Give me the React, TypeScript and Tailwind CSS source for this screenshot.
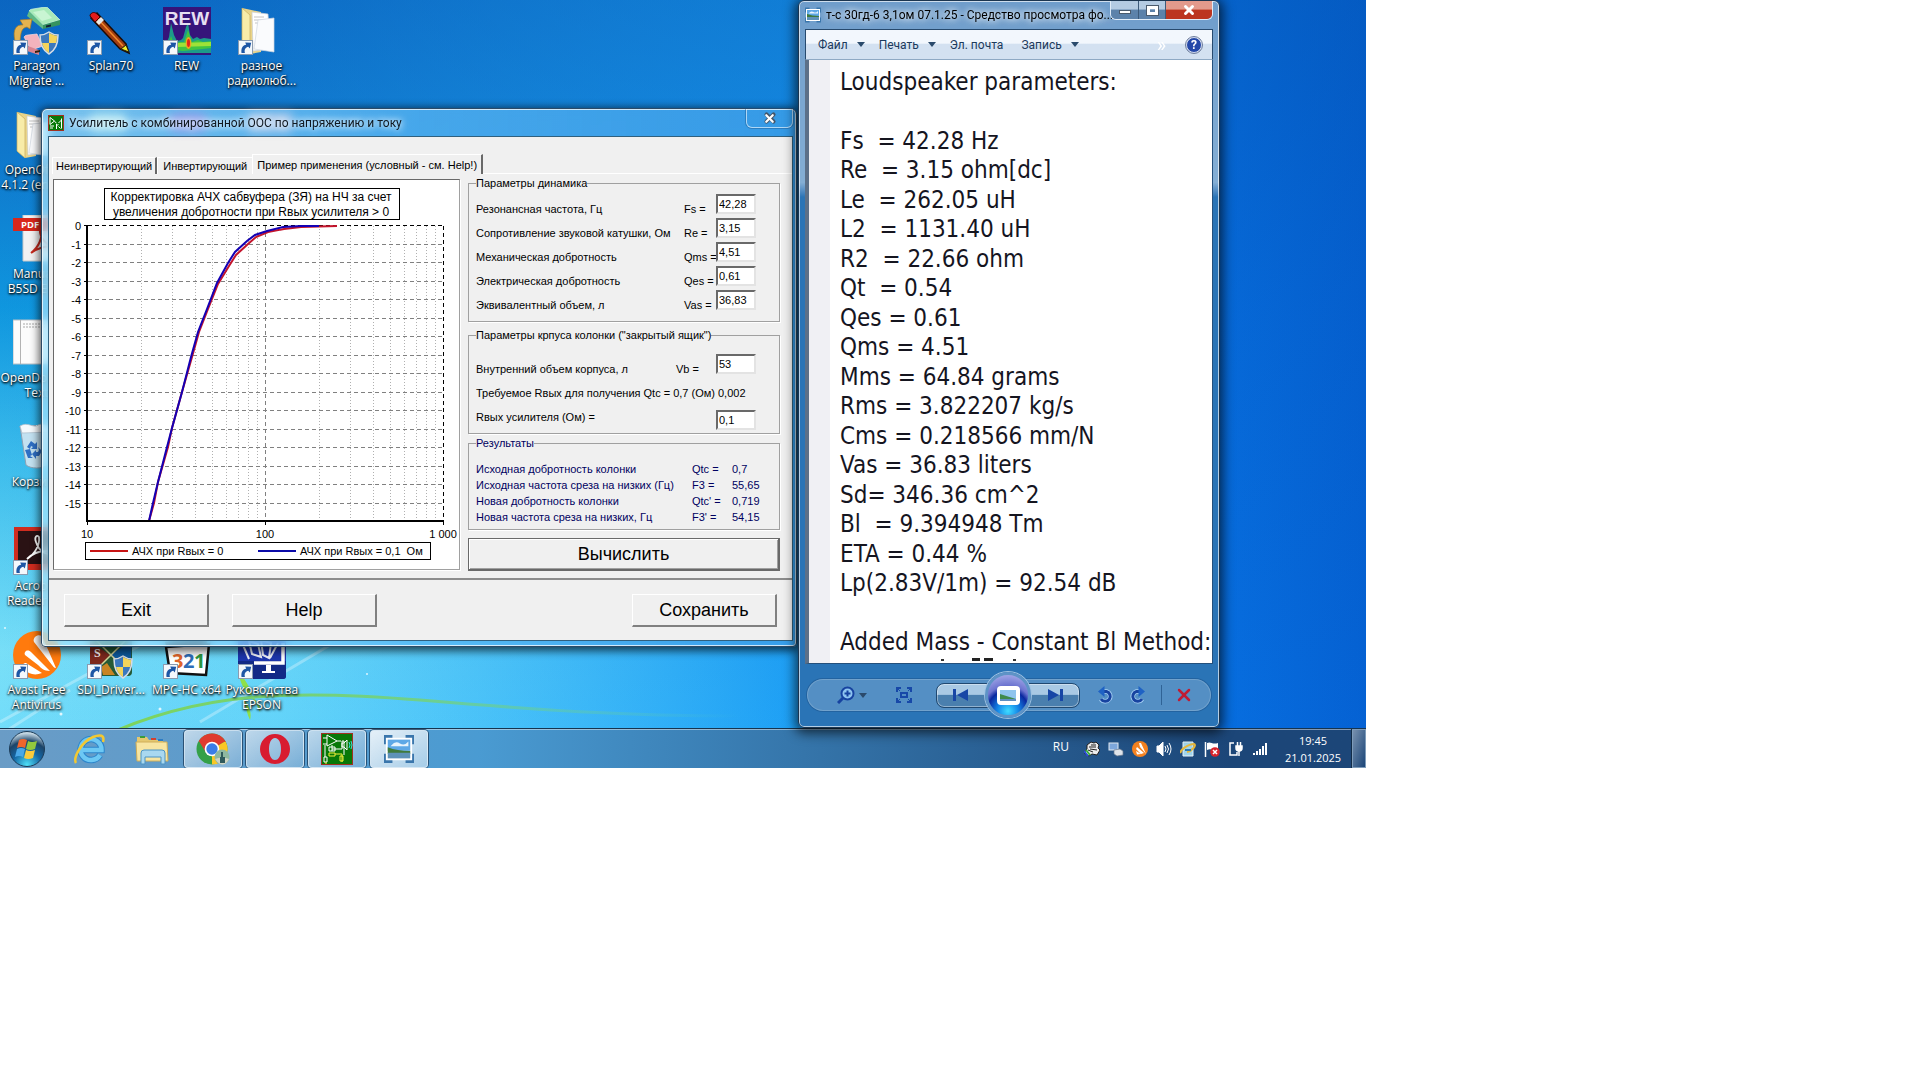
import type { ReactNode } from "react";
import { X } from "lucide-react";

const UI_FONT = "font-['Open_Sans','Noto_Sans',sans-serif]";
const TITLE_FONT = "font-['Roboto','Noto_Sans',sans-serif]";
const CLASSIC_FONT = "font-['Liberation_Sans',Arial,sans-serif]";

const driverFields = [
    { id: "fs", label: "Резонансная частота, Гц", sign: "Fs =", value: "42,28" },
    { id: "re", label: "Сопротивление звуковой катушки, Ом", sign: "Re =", value: "3,15" },
    { id: "qms", label: "Механическая добротность", sign: "Qms =", value: "4,51" },
    { id: "qes", label: "Электрическая добротность", sign: "Qes =", value: "0,61" },
    { id: "vas", label: "Эквивалентный объем, л", sign: "Vas =", value: "36,83" },
];

const results = [
    { label: "Исходная добротность колонки", sign: "Qtc =", value: "0,7" },
    { label: "Исходная частота среза на низких (Гц)", sign: "F3 =", value: "55,65" },
    { label: "Новая добротность колонки", sign: "Qtc' =", value: "0,719" },
    { label: "Новая частота среза на низких, Гц", sign: "F3' =", value: "54,15" },
];

const photoLines = [
    "Loudspeaker parameters:",
    "",
    "Fs  = 42.28 Hz",
    "Re  = 3.15 ohm[dc]",
    "Le  = 262.05 uH",
    "L2  = 1131.40 uH",
    "R2  = 22.66 ohm",
    "Qt  = 0.54",
    "Qes = 0.61",
    "Qms = 4.51",
    "Mms = 64.84 grams",
    "Rms = 3.822207 kg/s",
    "Cms = 0.218566 mm/N",
    "Vas = 36.83 liters",
    "Sd= 346.36 cm^2",
    "Bl  = 9.394948 Tm",
    "ETA = 0.44 %",
    "Lp(2.83V/1m) = 92.54 dB",
    "",
    "Added Mass - Constant Bl Method:",
];

function ShortcutArrow() {
    return (
        <g>
            <rect x="0.5" y="33.5" width="14" height="14" fill="#f4f8fc" stroke="#8a9bb0" />
            <path d="M3.5 46c-.6-5 1.2-7.600 4.700-8.200l-1-2.300 6 .2-1.400 5.800-1.500-1.700c-2.600.7-4.300 2.400-3.400 6.200z" fill="#1d56a5" />
        </g>
    );
}

function Folder() {
    return (
        <g>
            <path d="M4 1l19 4v40l-11 2L4 40z" fill="#e9d48a" />
            <path d="M4 1l8 7v39l-8-7z" fill="#f8eca9" stroke="#c8ae5c" strokeWidth=".7" />
            <path d="M14 5l16 2 2 35-17 2z" fill="#fff" stroke="#c9cdd4" strokeWidth=".7" />
            <path d="M16 10h10M16 13h12M17 16h7" stroke="#b4b4b4" strokeWidth=".8" />
            <path d="M20 13l16-2v34l-20-3z" fill="#fafbfd" stroke="#cfd6df" strokeWidth=".7" />
        </g>
    );
}

function Shield() {
    return (
        <g>
            <path d="M27 28c4 0 6-1 9-3 3 2 5 3 9 3 0 9-2 15-9 19-7-4-9-10-9-19z" fill="#3b78bd" stroke="#d7dde5" strokeWidth="1.500" />
            <path d="M36 26c3 1.500 5 2.500 8 2.700 0 3-.3 5-1 7.300h-7zM36 36v10c-4-2.500-6-5.500-7-10z" fill="#f3d45b" />
        </g>
    );
}

const desktopIcons: { col: string; name: string; icon: ReactNode }[] = [
    {
        col: "col-start-1 row-start-1",
        name: "Paragon Migrate ...",
        icon: (
            <g>
                <path d="M16 4q1-2 4-2l12-2q3 0 4 2l11 11-17 5z" fill="#a8eab9" stroke="#d4f7dc" strokeWidth=".7" />
                <path d="M20 5l11-2 8 8-10 3z" fill="#c9f5d3" />
                <path d="M16 4l14 14v4L14 9z" fill="#5fb986" />
                <path d="M30 18l17-5v5l-17 4z" fill="#36935f" />
                <path d="M33 18.500l5-1v2l-5 1z" fill="#123" />
                <path d="M11 30q1-2 4-2l9-1 6 12-12 4z" fill="#f3b3bd" stroke="#fbdce0" strokeWidth=".7" />
                <path d="M12 38l14 5v5l-12-4z" fill="#d98391" />
                <path d="M22 44l5-1v2l-5 1z" fill="#321" />
                <path d="M2 34C-1 22 4 17 10 18l-3-5 12-1-2 10-3-2c-6 1-6 6-7 14z" fill="#e4b350" stroke="#a97d25" strokeWidth=".7" />
                <Shield />
                <ShortcutArrow />
            </g>
        ),
    },
    {
        col: "col-start-2 row-start-1",
        name: "Splan70",
        icon: (
            <g>
                <path d="M4 11l6-5 29 31 3 9-9-4z" fill="#a13c12" stroke="#1c0b04" strokeWidth="1.500" />
                <path d="M10 11l26 28" stroke="#f08a2c" strokeWidth="1.500" />
                <path d="M3 9c0-3 4-5 7-2l3 3-5 5z" fill="#e21b1b" stroke="#400" />
                <path d="M9 15l5-5 3 3-5 5z" fill="#e8e8e8" />
                <path d="M34 42l5-4 3 7z" fill="#f4ee2a" stroke="#221" />
                <ShortcutArrow />
            </g>
        ),
    },
    {
        col: "col-start-3 row-start-1",
        name: "REW",
        icon: (
            <g>
                <rect width="48" height="48" fill="#36147a" />
                <path d="M2 40l4-10 2-14 3 12 3 6 4-1 2-2 3-11 2-4 2 12 3 4 4-2 3 2 4-1 7 1v14H8z" fill="#1c9b8a" />
                <path d="M4 42l4-13 3 8 6-2 4 0 4-12 4 12 6-2 5 2 8-1v7l-8 1-20 2z" fill="#41c442" />
                <path d="M14 36l34-1v4l-34 1z" fill="#9fe138" />
                <ellipse cx="25.500" cy="36" rx="2.800" ry="6" fill="#f0a31d" />
                <ellipse cx="25.500" cy="36" rx="1.500" ry="4" fill="#e3241a" />
                <text x="24" y="18" textAnchor="middle" fontSize="19" fontWeight="bold" fill="#e6dff2" fontFamily="Liberation Sans">REW</text>
                <ShortcutArrow />
            </g>
        ),
    },
    {
        col: "col-start-4 row-start-1",
        name: "разное радиолюб...",
        icon: (
            <g>
                <Folder />
                <ShortcutArrow />
            </g>
        ),
    },
    { col: "col-start-1 row-start-2", name: "OpenOffice 4.1.2 (en-US)", icon: <Folder /> },
    {
        col: "col-start-1 row-start-3",
        name: "Manual_ B5SD ENG",
        icon: (
            <g>
                <path d="M10 0h28l8 8v38H10z" fill="#f2f2f2" stroke="#c9c9c9" />
                <path d="M18 38c8-6 12-16 10-24-3 4 3 16 13 18-8-2-18 2-23 6z" fill="none" stroke="#c4281c" strokeWidth="2" />
                <rect y="3" width="40" height="13" fill="#d9271c" />
                <text x="8" y="13" fontSize="9.500" fontWeight="bold" fill="#fff" fontFamily="Open Sans">PDF</text>
            </g>
        ),
    },
    {
        col: "col-start-1 row-start-4",
        name: "OpenDocument Text",
        icon: (
            <g>
                <path d="M0 1h40v44H0z" fill="#fcfcfc" stroke="#b9bec4" />
                <path d="M7.500 1v44" stroke="#b3b3b3" />
                <path d="M10 5h22M10 8h22" stroke="#a8a8a8" strokeDasharray="2 1" />
            </g>
        ),
    },
    {
        col: "col-start-1 row-start-5",
        name: "Корзина",
        icon: (
            <g>
                <path d="M7 3l34-1-6 40c-6 4-17 4-22 0z" fill="#dce9f2" fillOpacity=".85" stroke="#8fa3b4" />
                <path d="M7 3c8-5 14 3 18-1 6-3 10 3 16 0l-2 7-30 1z" fill="#f5f9fc" stroke="#a9bac8" strokeWidth=".7" />
                <path d="M14 24l4-6 4 3 2-2v7h-6l2-2-2-1-1 3zM25 24l4 4-3 5h-3v3l-4-5 4-4v2h2l1-2zM12 27l5-1 2 6-2 1 3 2h-5z" fill="#2f6fc4" />
            </g>
        ),
    },
    {
        col: "col-start-1 row-start-6",
        name: "Acrobat Reader DC",
        icon: (
            <g>
                <rect x="1" width="46" height="43" fill="#d02c1f" />
                <rect x="5" y="4" width="38" height="33" fill="#2a1214" />
                <path d="M14 32c9-6 13-15 12-22-2-3-5 0-3 5 3 9 9 12 14 12 3-1 2-4-4-3-8 0-15 4-19 8z" fill="none" stroke="#fff" strokeWidth="1.800" />
                <ShortcutArrow />
            </g>
        ),
    },
    {
        col: "col-start-1 row-start-7",
        name: "Avast Free Antivirus",
        icon: (
            <g>
                <circle cx="24" cy="24" r="24" fill="#ff7a0d" />
                <path d="M22 6c3-3 7-2 8 1l13 30c-2 0-3-2-4-3L21 11c-1-2 0-4 1-5zM13 20c2-1 4 0 5 1l19 19c-6 0-9-3-12-6L12 24c-1-2 0-3 1-4zM13 32l16 10c-7 3-14 1-18-4-2-4-1-6 2-6z" fill="#fff" />
                <ShortcutArrow />
            </g>
        ),
    },
    {
        col: "col-start-2 row-start-7",
        name: "SDI_Driver...",
        icon: (
            <g>
                <rect x="3" y="2" width="42" height="43" rx="4" fill="#255a36" />
                <path d="M3 10l20 14L6 42H3z" fill="#7d281d" />
                <path d="M45 10L23 24l20 18z" fill="#0c5a9e" />
                <path d="M8 8l30 30M40 8L10 38" stroke="#d7d59a" strokeWidth="1.500" />
                <text x="7" y="26" fontSize="12" fontWeight="bold" fill="#fff" fontFamily="Liberation Serif">S</text>
                <path d="M14 36l6-4 8 12H16z" fill="#c88424" />
                <Shield />
                <ShortcutArrow />
            </g>
        ),
    },
    {
        col: "col-start-3 row-start-7",
        name: "MPC-HC x64",
        icon: (
            <g>
                <path d="M2 11l40-7 2 8-40 6z" fill="#222" />
                <path d="M3 16l43-3-3 31-36-2z" fill="#fff" stroke="#111" strokeWidth="2.500" />
                <text x="9" y="37" fontSize="20" fontWeight="bold" fill="#e0642a" fontFamily="Open Sans">3</text>
                <text x="20" y="37" fontSize="20" fontWeight="bold" fill="#2d6cb8" fontFamily="Open Sans">2</text>
                <text x="31" y="37" fontSize="20" fontWeight="bold" fill="#2c9640" fontFamily="Open Sans">1</text>
                <ShortcutArrow />
            </g>
        ),
    },
    {
        col: "col-start-4 row-start-7",
        name: "Руководства EPSON",
        icon: (
            <g>
                <rect width="48" height="48" rx="3" fill="#1d36ad" />
                <path d="M0 30h48v15a3 3 0 0 1-3 3H3a3 3 0 0 1-3-3z" fill="#122a86" />
                <path d="M5 14l6 14M11 10l9 3 3 13-9-3zM23 9l10 3-2 15-6-3zM40 12l-8 15" fill="none" stroke="#f0f3fd" strokeWidth="2" />
                <path d="M45 12v20H16" fill="none" stroke="#fff" strokeWidth="3.500" />
                <path d="M28 34h5v6h-5zM24 40h13v2H24z" fill="#fff" />
                <ShortcutArrow />
            </g>
        ),
    },
];

function DesktopIcon({ col, name, icon }: { col: string; name: string; icon: ReactNode }) {
    return (
        <button type="button" className={`${col} flex flex-col items-center justify-start gap-[3px]`}>
            <svg width="48" height="48" viewBox="0 0 48 48" className="shrink-0">
                {icon}
            </svg>
            <span className="w-[72px] text-center text-[12px] leading-[15px] text-white [text-shadow:0_1px_2px_#000,1px_1px_3px_#000]">
                {name}
            </span>
        </button>
    );
}

function Wallpaper() {
    return (
        <svg viewBox="0 0 1366 768" preserveAspectRatio="none" className="absolute inset-0 h-full w-full">
            <defs>
                <linearGradient id="sky" x1="0" y1="0" x2="0" y2="1">
                    <stop offset="0" stopColor="#0f74d2" />
                    <stop offset=".2" stopColor="#1489da" />
                    <stop offset=".4" stopColor="#12a8ea" />
                    <stop offset=".6" stopColor="#45cdf5" />
                    <stop offset=".85" stopColor="#7ee6fb" />
                    <stop offset="1" stopColor="#6fdcfb" />
                </linearGradient>
                <linearGradient id="east" x1="0" y1="0" x2="1" y2="0">
                    <stop offset="0" stopColor="#0a84ee" stopOpacity="0" />
                    <stop offset=".2" stopColor="#25b0fb" stopOpacity=".2" />
                    <stop offset=".58" stopColor="#1a9ef6" stopOpacity=".95" />
                    <stop offset=".85" stopColor="#0874e6" />
                    <stop offset="1" stopColor="#0562d4" />
                </linearGradient>
                <linearGradient id="top" x1="0" y1="0" x2="0" y2="1">
                    <stop offset="0" stopColor="#0450a8" stopOpacity=".4" />
                    <stop offset=".4" stopColor="#0450b0" stopOpacity=".2" />
                    <stop offset="1" stopColor="#0450b0" stopOpacity="0" />
                </linearGradient>
                <linearGradient id="stem" x1="0" y1="0" x2="1" y2="0">
                    <stop offset="0" stopColor="#7ed45a" />
                    <stop offset=".5" stopColor="#6fd08a" />
                    <stop offset="1" stopColor="#4fc4c8" stopOpacity="0" />
                </linearGradient>
            </defs>
            <rect width="1366" height="768" fill="url(#sky)" />
            <rect width="1366" height="768" fill="url(#east)" />
            <rect width="1366" height="768" fill="url(#top)" />
            <path d="M0 722L150 640M0 735L70 690M200 722L330 645" stroke="#fff" strokeOpacity=".3" strokeWidth="3" />
            <path d="M100 738C200 690 300 690 420 700S620 716 740 716" fill="none" stroke="url(#stem)" strokeWidth="3" />
            <path d="M238 672c3 12 6 20 14 24-2-10-8-18-14-24zM244 700c2 8 3 14 6 20 2-8-1-14-6-20zM252 698c4 4 6 10 8 14 1-6-3-12-8-14z" fill="#8ee04a" />
            <g fill="#fff" fillOpacity=".8">
                <circle cx="61" cy="714" r="1.500" />
                <circle cx="160" cy="709" r="1.500" />
                <circle cx="367" cy="674" r="1" />
                <circle cx="5" cy="628" r="1" />
            </g>
        </svg>
    );
}

const minorTicks = [2, 3, 4, 5, 6, 7, 8, 9];
const X0 = 34.5;
const DECADE = 178;
const Y0 = 47;
const STEP = 18.5;
const redCurve =
    "96,342 101,324 105,303 115,268 119,249 129,213 139,178 146,153 155,130 165,105 176,87 183,76 195,65 203,58 215,53 231,50 248,48 284,47";
const blueCurve =
    "96,342 100,324 105,303 114,268 119,249 129,213 138,178 145,153 154,130 164,104 175,84 182,73 194,62 202,56 214,52 230,48 248,47 266,47";

function ResponseChart() {
    return (
        <svg width="405" height="389" viewBox="1 1 405 389" fontFamily="Liberation Sans" fontSize="12" fill="#000">
            <rect x="51.5" y="9.500" width="295" height="31" fill="#fff" stroke="#000" />
            <text x="198" y="22" textAnchor="middle">Корректировка АЧХ сабвуфера (ЗЯ) на НЧ за счет</text>
            <text x="198" y="37" textAnchor="middle">увеличения добротности при Rвых усилителя &gt; 0</text>
            {[0, 1].map((decade) =>
                minorTicks.map((tick) => {
                    const x = Math.round(X0 + DECADE * (decade + Math.log10(tick))) + 0.5;
                    return <path key={`${decade}-${tick}`} d={`M${x} 47V341`} stroke="#b0b0b0" strokeDasharray="1 2" />;
                }),
            )}
            <path d="M212.500 47V341" stroke="#808080" strokeDasharray="4 3" />
            {Array.from({ length: 16 }, (_, i) => {
                const y = Math.round(Y0 + i * STEP) - 0.5;
                return (
                    <g key={i}>
                        <path d={`M31 ${y}H35M33 ${y + 9}H35`} stroke="#000" />
                        <path d={`M35 ${y}H390`} stroke={i === 0 ? "#000" : "#808080"} strokeDasharray="4 3" />
                        <text x="28" y={y + 4} textAnchor="end" fontSize="11">
                            {i === 0 ? "0" : -i}
                        </text>
                    </g>
                );
            })}
            <path d="M390.500 47V341" stroke="#000" strokeDasharray="4 3" />
            <polyline points={redCurve} fill="none" stroke="#c4142c" strokeWidth="2" />
            <polyline points={blueCurve} fill="none" stroke="#1400b4" strokeWidth="2" />
            <path d="M34 46V342H391" fill="none" stroke="#000" strokeWidth="2" />
            <path d="M34.500 342V346M212.500 342V346M390.500 342V346" stroke="#000" />
            <text x="34" y="359" textAnchor="middle" fontSize="11">10</text>
            <text x="212" y="359" textAnchor="middle" fontSize="11">100</text>
            <text x="390" y="359" textAnchor="middle" fontSize="11">1 000</text>
            <rect x="32.5" y="363.500" width="345" height="17" fill="#fff" stroke="#000" />
            <path d="M37 372H75" stroke="#c81414" strokeWidth="2" />
            <text x="79" y="376" fontSize="11">АЧХ при Rвых = 0</text>
            <path d="M205 372H243" stroke="#0a0aa8" strokeWidth="2" />
            <text x="247" y="376" fontSize="11" xmlSpace="preserve">АЧХ при Rвых = 0,1  Ом</text>
        </svg>
    );
}

function Group({ title, className, children }: { title: string; className: string; children: ReactNode }) {
    return (
        <fieldset className={`border border-[#a0a0a0] pl-[7px] shadow-[1px_1px_0_#fff] ${className}`}>
            <legend className="px-0 leading-3">{title}</legend>
            {children}
        </fieldset>
    );
}

function Field({ id, value, className = "" }: { id: string; value: string; className?: string }) {
    return (
        <input
            id={id}
            defaultValue={value}
            className={`h-5 w-10 border-2 border-t-[#696969] border-r-[#e3e3e3] border-b-[#e3e3e3] border-l-[#696969] bg-white px-px outline-none ${className}`}
        />
    );
}

function PushButton({ children }: { children: ReactNode }) {
    return (
        <button
            type="button"
            className="h-[33px] w-[145px] border-t border-r-2 border-b-2 border-l border-t-white border-r-[#808080] border-b-[#808080] border-l-white bg-[#f0f0f0] text-[18px] leading-6"
        >
            {children}
        </button>
    );
}

function AmplifierIcon({ size }: { size: number }) {
    return (
        <svg width={size} height={size} viewBox="0 0 32 32" className="shrink-0">
            <rect x=".5" y=".5" width="31" height="31" fill="#087808" stroke="#a03020" />
            <path d="M6 2l10 6-10 5zM2 5h4M2 11h4M16 8h4M11 12v6M11 16h10v-8h2v14" fill="none" stroke="#fff" />
            <path d="M8 14h6v4H8zM3 24h3v5H3zM4 12v12" fill="none" stroke="#fff" />
            <path d="M8 20h6v3H8zM14 21h7v8M19 23h3v5h-3zM4 30h2" fill="none" stroke="#f6f03a" />
            <path d="M21 10h2l3-3v10l-3-3h-2z" fill="none" stroke="#fff" />
            <path d="M28 9q2 3 0 6M30 8q2 4 0 8" fill="none" stroke="#3ce0e0" />
        </svg>
    );
}

function AmplifierTitleIcon() {
    return (
        <svg width="16" height="16" viewBox="0 0 16 16" className="shrink-0">
            <rect x=".5" y=".5" width="15" height="15" fill="#087808" stroke="#a03020" />
            <path d="M2 2.500v7l4.500-3.500zM6.500 6.500l2 1.500M2 11h4M2 13h3M8.500 9v5M8.500 10.500l2-1M10.500 11.500l2 2M13.500 3.500v10M10.500 8l3-3" fill="none" stroke="#fff" />
        </svg>
    );
}

function AmplifierWindow() {
    return (
        <section className="absolute top-[108px] left-[41px] w-[756px] rounded-t-md rounded-b-sm border border-[#2c4a66] bg-linear-to-r from-[#a8e4fb]/70 via-[#5cb8f4]/70 to-[#3e9fe8]/80 pr-[3px] pb-[5px] pl-[6px] shadow-[0_2px_9px_2px_rgba(0,0,0,.65),inset_0_0_0_1px_rgba(255,255,255,.75)] backdrop-blur-[5px]">
            <header className="relative flex h-[27px] items-center">
                <div className="absolute inset-y-1 left-10 flex gap-10 opacity-60 blur-[5px]">
                    <span className="w-10 rounded-full bg-[#d4fbf4]" />
                    <span className="w-10 rounded-full bg-[#a890e8]" />
                    <span className="w-11 bg-[#e6dcec]" />
                </div>
                <div className="relative flex items-center gap-[5px]">
                    <AmplifierTitleIcon />
                    <h1 className={`text-[12px] leading-4 text-[#101820] [text-shadow:0_0_6px_#fff,0_0_8px_#fff] ${TITLE_FONT}`}>
                        Усилитель с комбинированной ООС по напряжению и току
                    </h1>
                </div>
                <button
                    type="button"
                    aria-label="Закрыть"
                    className="absolute top-0 right-0 flex h-[19px] w-[47px] items-center justify-center rounded-b-md border border-t-0 border-white/60 shadow-[0_0_0_1px_rgba(30,80,130,.4)]"
                >
                    <X size={14} strokeWidth={7} className="absolute text-[#44566a]" />
                    <X size={13} strokeWidth={4} className="absolute text-white" />
                </button>
            </header>

            <div className={`border border-[#30607e] bg-[#f0f0f0] text-black ${CLASSIC_FONT}`}>
                <nav className="flex h-[37px] items-end pl-[3px] text-[11px]">
                    <button type="button" className="h-[17px] border-t border-r-2 border-l border-t-white border-r-[#696969] border-l-white px-[3px] leading-4">
                        Неинвертирующий
                    </button>
                    <button type="button" className="h-[17px] border-t border-l border-white px-[5px] leading-4">
                        Инвертирующий
                    </button>
                    <button type="button" className="h-5 border-t border-r-2 border-l border-t-white border-r-[#696969] border-l-white px-1 leading-4">
                        Пример применения (условный - см. Help!)
                    </button>
                    <span className="h-px flex-1 bg-white" />
                </nav>

                <div className="flex gap-2 border-b-2 border-[#8c8c8c] pt-[3px] pr-3 pb-[7px] pl-1">
                    <div className="mt-[2px] min-w-0 flex-1">
                        <div className="h-[391px] border border-t-[#696969] border-r-[#a0a0a0] border-b-[#a0a0a0] border-l-[#696969] bg-white shadow-[1px_1px_0_#fff]">
                            <ResponseChart />
                        </div>
                    </div>

                    <form className="flex w-[312px] flex-col text-[11px]">
                        <Group title="Параметры динамика" className="pt-[5px] pb-[7px]">
                            {driverFields.map((field) => (
                                <div key={field.id} className="grid h-6 grid-cols-[208px_32px_40px] items-end leading-[17px]">
                                    <label htmlFor={field.id} className="whitespace-nowrap">{field.label}</label>
                                    <span className="whitespace-nowrap">{field.sign}</span>
                                    <Field id={field.id} value={field.value} className="self-start" />
                                </div>
                            ))}
                        </Group>

                        <Group title={'Параметры крпуса колонки ("закрытый ящик")'} className="mt-[7px] pt-[13px] pb-[3px]">
                            <div className="grid h-6 grid-cols-[200px_40px_40px] items-end leading-[17px]">
                                <label htmlFor="vb">Внутренний объем корпуса, л</label>
                                <span>Vb =</span>
                                <Field id="vb" value="53" className="self-start" />
                            </div>
                            <div className="flex h-6 items-end gap-[3px] leading-[17px]">
                                <span className="whitespace-nowrap">Требуемое Rвых для получения Qtc = 0,7 (Ом)</span>
                                <output>0,002</output>
                            </div>
                            <div className="grid h-7 grid-cols-[240px_40px] items-end">
                                <label htmlFor="rout" className="leading-[25px]">Rвых усилителя (Ом) =</label>
                                <Field id="rout" value="0,1" />
                            </div>
                        </Group>

                        <Group title="Результаты" className="mt-[3px] pt-3 pb-1 text-[#000060]">
                            {results.map((row) => (
                                <div key={row.sign} className="grid grid-cols-[216px_40px_40px] leading-4">
                                    <span className="whitespace-nowrap">{row.label}</span>
                                    <span>{row.sign}</span>
                                    <output>{row.value}</output>
                                </div>
                            ))}
                        </Group>

                        <button
                            type="button"
                            className="mt-2 h-[33px] border border-r-2 border-b-2 border-[#696969] text-[18px] leading-6 shadow-[inset_1px_1px_0_#fff,inset_-1px_-1px_0_#a0a0a0]"
                        >
                            Вычислить
                        </button>
                    </form>
                </div>

                <footer className="flex gap-[23px] px-[15px] pt-[14px] pb-[13px]">
                    <PushButton>Exit</PushButton>
                    <PushButton>Help</PushButton>
                    <span className="flex-1" />
                    <PushButton>Сохранить</PushButton>
                </footer>
            </div>
        </section>
    );
}

function Caret() {
    return (
        <svg width="8" height="5" viewBox="0 0 8 5">
            <path d="M0 0h8L4 5z" fill="#2a4a6c" />
        </svg>
    );
}

function PictureIcon({ size = 16 }: { size?: number }) {
    return (
        <svg width={size} height={size} viewBox="0 0 32 32" className="shrink-0">
            <path d="M0 1h9v6H6v4H0zM23 1h9v10h-6V7h-3zM32 31h-9v-6h3v-4h6zM9 31H0V21h6v4h3z" fill="#3a76ac" />
            <rect x="2" y="4" width="28" height="24" fill="#fff" />
            <rect x="4" y="6" width="24" height="12" fill="#5ea8e6" />
            <path d="M8 12q4-5 9-2t9-2v5H7z" fill="#e7f3fc" />
            <path d="M4 14q10 4 24 4v3H4z" fill="#3f7a3c" />
            <path d="M4 20h24v6H4z" fill="#5e92b8" />
        </svg>
    );
}

function RotateIcon({ clockwise = false }: { clockwise?: boolean }) {
    return (
        <svg width="16" height="18" viewBox="0 0 16 18">
            <g transform={clockwise ? "translate(16 0) scale(-1 1)" : undefined}>
                <path d="M6 5.500h3.500a5 5 0 1 1-5.500 7.500" fill="none" stroke="#a8d0f4" strokeWidth="4.500" />
                <path d="M6 5.500h3.500a5 5 0 1 1-5.500 7.500" fill="none" stroke="#1743a0" strokeWidth="3" />
                <path d="M1 5.500L7.500 0v11z" fill="#1f62c4" />
            </g>
        </svg>
    );
}

function ViewerWindow() {
    return (
        <section className="absolute top-0 left-[798px] flex w-[422px] flex-col rounded-md border border-[#1b3550] bg-linear-to-b from-[#6f9dcb] via-[#84aed4] via-25% to-[#2a74b6] to-27% px-[6px] pb-px text-[#1c3a5c] shadow-[0_2px_12px_3px_rgba(0,0,0,.65),inset_0_0_0_1px_rgba(255,255,255,.65)]">
            <header className="flex h-7 items-start justify-between">
                <div className="flex h-7 min-w-0 items-center gap-[5px]">
                    <PictureIcon />
                    <h2 className={`whitespace-nowrap text-[12px] leading-4 text-black [text-shadow:0_0_6px_#fff,0_0_8px_#fff] ${TITLE_FONT}`}>
                        т-с 30гд-6 3,1ом 07.1.25 - Средство просмотра фо...
                    </h2>
                </div>
                <div className="flex h-[19px] shrink-0 overflow-hidden rounded-b-md border border-t-0 border-[#e0ecf8]">
                    <button type="button" aria-label="Свернуть" className="flex w-7 items-center justify-center border-r border-[#3c5a7a] bg-linear-to-b from-[#b4cbe2] from-45% to-[#5c82aa] to-50%">
                        <span className="mt-1 h-[4px] w-3 border border-[#4a5a6c] bg-white" />
                    </button>
                    <button type="button" aria-label="Развернуть" className="flex w-[27px] items-center justify-center border-r border-[#3c5a7a] bg-linear-to-b from-[#b4cbe2] from-45% to-[#5c82aa] to-50%">
                        <span className="h-[9px] w-[11px] border-[3px] border-white outline outline-[#4a5a6c]" />
                    </button>
                    <button type="button" aria-label="Закрыть" className="flex w-[46px] items-center justify-center bg-linear-to-b from-[#e39a8c] from-45% to-[#bc3520] to-50%">
                        <X size={14} strokeWidth={5} className="text-white" />
                    </button>
                </div>
            </header>

            <nav className={`flex h-[31px] items-center border border-b-[#8ea9c4] border-[#274a6e] bg-linear-to-b from-[#f2f7fd] from-45% to-[#d3e1f1] to-50% pr-[10px] pl-3 text-[12px] ${TITLE_FONT}`}>
                <button type="button" className="flex items-center gap-[9px]">Файл <Caret /></button>
                <button type="button" className="ml-[14px] flex items-center gap-[9px]">Печать <Caret /></button>
                <button type="button" className="ml-[14px]">Эл. почта</button>
                <button type="button" className="ml-[18px] flex items-center gap-[9px]">Запись <Caret /></button>
                <span className="flex-1" />
                <span className="mr-5 text-[20px] leading-4 text-white">»</span>
                <button type="button" aria-label="Справка" className="flex size-4 items-center justify-center rounded-full border border-[#d4dcf0] bg-[#2448a8] text-[12px] leading-3 font-bold text-white outline outline-[#6c7c9c]">
                    ?
                </button>
            </nav>

            <div className="h-[604px] overflow-hidden border-r border-b border-l-4 border-[#5c7088] border-r-[#24507c] border-b-[#24507c] bg-[#f0f0f4] pl-[21px]">
                <div className="h-full bg-white pt-[7px] pl-[10px]">
                    <div className="grid h-[590px] auto-rows-fr items-center font-['DejaVu_Sans_Condensed','Noto_Sans',sans-serif] text-[24px] text-[#15151f]">
                        {photoLines.map((line, i) => (
                            <p key={i} className="leading-7 whitespace-pre">{line}</p>
                        ))}
                    </div>
                    <div className="ml-[101px] flex h-1 items-end">
                        <i className="h-[2px] w-[3px] bg-[#333]" />
                        <i className="ml-7 h-[3px] w-2 bg-[#222]" />
                        <i className="ml-1 h-[3px] w-[9px] bg-[#222]" />
                        <i className="ml-5 h-[2px] w-[3px] bg-[#333]" />
                    </div>
                </div>
            </div>

            <div className="flex h-[62px] items-center px-[2px]">
                <div className="flex h-8 w-full items-center rounded-full border border-[#7fa9cf]/70 bg-white/20 pr-4 pl-[29px] shadow-[0_0_0_1px_rgba(20,60,110,.3)]">
                    <button type="button" aria-label="Масштаб" className="flex items-center gap-1">
                        <svg width="18" height="18" viewBox="0 0 18 18" fill="none" stroke="#1743a0">
                            <circle cx="10.500" cy="7.500" r="6" fill="#8ec4f0" strokeWidth="2" />
                            <path d="M6 12L1 17" strokeWidth="3" />
                            <path d="M7.500 7.500h6M10.500 4.500v6" strokeWidth="2" />
                        </svg>
                        <Caret />
                    </button>
                    <button type="button" aria-label="По размеру окна" className="ml-[29px]">
                        <svg width="16" height="16" viewBox="0 0 16 16" fill="none" stroke="#1748a8" strokeWidth="2">
                            <path d="M1 5V1h4M11 1h4v4M15 11v4h-4M5 15H1v-4M5 6h6v4H5z" />
                            <path d="M1 1l3 3M15 1l-3 3M15 15l-3-3M1 15l3-3" strokeWidth="1" />
                        </svg>
                    </button>
                    <button type="button" aria-label="Назад" className="ml-6 flex h-[25px] w-[55px] items-center justify-center rounded-l-lg border border-[#204870] bg-linear-to-b from-[#a9c9e4] from-45% to-[#4a7fae] to-50% pr-1 shadow-[inset_0_0_0_1px_rgba(255,255,255,.4)]">
                        <svg width="15" height="12" viewBox="0 0 15 12" fill="#1746a6">
                            <path d="M0 0h3v12H0zM15 0v12L4 6z" />
                        </svg>
                    </button>
                    <button type="button" aria-label="Слайд-шоу" className="relative z-10 -mx-1 flex size-[46px] shrink-0 items-center justify-center rounded-full border-[3px] border-[#5e93c6] bg-[radial-gradient(circle_at_50%_90%,#40dcff_0,#1488e8_25%,#0a28a0_50%,#6c74d0_62%,#b8bcf0_100%)] shadow-[0_0_0_1px_#9fc2e2]">
                        <span className="flex h-[19px] w-[23px] items-center justify-center rounded-sm bg-white">
                            <svg width="16" height="11" viewBox="0 0 16 11">
                                <rect width="16" height="11" fill="#8fc4ee" />
                                <path d="M0 4l16 5v2H0z" fill="#3f8a4c" />
                                <path d="M0 9h16v2H0z" fill="#5e8fc0" />
                            </svg>
                        </span>
                    </button>
                    <button type="button" aria-label="Далее" className="flex h-[25px] w-[55px] items-center justify-center rounded-r-lg border border-[#204870] bg-linear-to-b from-[#a9c9e4] from-45% to-[#4a7fae] to-50% pl-1 shadow-[inset_0_0_0_1px_rgba(255,255,255,.4)]">
                        <svg width="15" height="12" viewBox="0 0 15 12" fill="#1746a6">
                            <path d="M12 0h3v12h-3zM0 0v12l11-6z" />
                        </svg>
                    </button>
                    <button type="button" aria-label="Повернуть влево" className="ml-[17px]">
                        <RotateIcon />
                    </button>
                    <button type="button" aria-label="Повернуть вправо" className="ml-[17px]">
                        <RotateIcon clockwise />
                    </button>
                    <span className="ml-[15px] h-5 w-px bg-[#2f6396]" />
                    <button type="button" aria-label="Удалить" className="ml-3">
                        <X size={20} strokeWidth={3} className="text-[#c01c34]" />
                    </button>
                </div>
            </div>
        </section>
    );
}

function TaskButton({ active = false, label, children }: { active?: boolean; label: string; children: ReactNode }) {
    return (
        <button
            type="button"
            aria-label={label}
            className={`flex h-[38px] w-[58px] items-center justify-center rounded-sm border border-[#dceaf4]/80 shadow-[0_0_0_1px_rgba(20,50,80,.7)] ${active ? "bg-linear-to-br from-white/85 to-white/50" : "bg-linear-to-br from-white/60 to-white/20"}`}
        >
            {children}
        </button>
    );
}

function Taskbar() {
    return (
        <footer className="absolute inset-x-0 bottom-0 flex h-10 items-center border-t border-[#16344f] bg-linear-to-r from-[#6a9cc6] via-[#4a9bd2] via-35% to-[#1c4678] to-90% shadow-[inset_0_1px_0_rgba(255,255,255,.45)]">
            <button type="button" aria-label="Пуск" className="ml-2">
                <svg width="38" height="38" viewBox="0 0 38 38">
                    <defs>
                        <radialGradient id="orb" cx=".5" cy=".95" r=".9">
                            <stop offset="0" stopColor="#4fe0f8" />
                            <stop offset=".45" stopColor="#1466a4" />
                            <stop offset=".75" stopColor="#1c4468" />
                            <stop offset="1" stopColor="#c4d8e4" />
                        </radialGradient>
                    </defs>
                    <circle cx="19" cy="19" r="17.500" fill="url(#orb)" stroke="#1c3c58" />
                    <path d="M11 10q4-2 8 0l-2 8q-4-2-8 0z" fill="#f0652c" />
                    <path d="M20 11q4 2 9 0l-2 8q-5 2-9 0z" fill="#92c83e" />
                    <path d="M9 19q4-2 8 0l-2 8q-4-2-8 0z" fill="#4aa8e8" />
                    <path d="M18 20q4 2 9 0l-2 8q-5 2-9 0z" fill="#fbcb3c" />
                </svg>
            </button>
            <button type="button" aria-label="Internet Explorer" className="ml-[27px]">
                <svg width="34" height="34" viewBox="0 0 34 34" fill="none">
                    <path d="M27 23a10.500 10.500 0 1 1 1.500-5H9" stroke="#2c86cc" strokeWidth="6.500" />
                    <path d="M27 23a10.500 10.500 0 1 1 1.500-5H9" stroke="#6cc8f4" strokeWidth="4.500" />
                    <path d="M3 31C0 26 8 10 20 5c7-3 12-2 10 5" stroke="#f2c832" strokeWidth="2.500" />
                </svg>
            </button>
            <button type="button" aria-label="Проводник" className="ml-7">
                <svg width="34" height="32" viewBox="0 0 34 32">
                    <path d="M2 4h10l2 3h14v6H2z" fill="#e4c870" />
                    <path d="M5 3h5v2H5z" fill="#3a9c3c" />
                    <path d="M16 5h5v2h-5z" fill="#d4402c" />
                    <path d="M23 6h5v2h-5z" fill="#2c7cc4" />
                    <path d="M1 9h31l1 19H2z" fill="#f7e5a2" stroke="#d0ae58" />
                    <path d="M6 31V20q0-3 3-3h18q3 0 3 3v11h-4v-7H10v7z" fill="#a9d8f0" stroke="#4c94c4" />
                </svg>
            </button>
            <div className="ml-[15px] flex gap-1">
                <TaskButton label="Chrome">
                    <svg width="34" height="34" viewBox="0 0 34 34">
                        <circle cx="16" cy="17" r="15.500" fill="#34a048" />
                        <path d="M16 17L2.600 9.200A15.500 15.500 0 0 1 29.400 9.200z" fill="#df3b2f" />
                        <path d="M16 17L29.400 9.200A15.500 15.500 0 0 1 16 32.500z" fill="#fbc725" />
                        <path d="M16 10h13.800L29.400 9.200H3L9.900 20.500z" fill="#df3b2f" />
                        <circle cx="16" cy="17" r="7.300" fill="#fff" />
                        <circle cx="16" cy="17" r="5.700" fill="#3b7de8" />
                        <circle cx="26" cy="25" r="7.500" fill="#8fb8a0" />
                        <path d="M19 27q7-3 14 0-3 6-7 5.500T19 27z" fill="#d0d4c4" />
                        <path d="M25 20h2v5h2v6h-5v-6h1z" fill="#2f5a5c" />
                    </svg>
                </TaskButton>
                <TaskButton label="Opera">
                    <svg width="32" height="32" viewBox="0 0 32 32">
                        <path fillRule="evenodd" d="M16 1a15 15 0 1 0 0 30 15 15 0 0 0 0-30zm0 4c4 0 6 5 6 11s-2 11-6 11-6-5-6-11 2-11 6-11z" fill="#d81c30" />
                    </svg>
                </TaskButton>
                <TaskButton label="Усилитель">
                    <AmplifierIcon size={32} />
                </TaskButton>
                <TaskButton active label="Средство просмотра">
                    <PictureIcon size={30} />
                </TaskButton>
            </div>
            <span className="flex-1" />
            <span className="pb-1 text-[12px] text-white">RU</span>
            <div className="ml-[15px] flex gap-2">
                <svg width="16" height="16" viewBox="0 0 16 16">
                    <path d="M3 4l4-3 3 1 2-1 3 3-1 3 2 2-3 5-5-1-3 2-5-3 3-4z" fill="#ececec" stroke="#222" />
                    <path d="M5 6h7M6 8l7 1M7 4h5M4 9l5 2" stroke="#222" />
                    <path d="M0 10l4 5" stroke="#2c4cd8" strokeWidth="2" />
                    <path d="M2 9l4 5" stroke="#38b040" strokeWidth="2" />
                </svg>
                <svg width="16" height="16" viewBox="0 0 16 16">
                    <rect x="1" y="2" width="9" height="7" fill="#7ea8dc" stroke="#e4ecf4" />
                    <path d="M6 9l6-1 3 2v4l-6 1-3-2z" fill="#dfe4ea" stroke="#68788c" strokeWidth=".7" />
                </svg>
                <svg width="16" height="16" viewBox="0 0 16 16">
                    <circle cx="8" cy="8" r="8" fill="#f58220" />
                    <path d="M7 2h2l5 11-6-7zM5 6l7 6-3 1-5-5zM4 10l5 3-4 .5z" fill="#fff" />
                </svg>
                <svg width="16" height="16" viewBox="0 0 16 16" fill="none" stroke="#fff">
                    <path d="M1 5h2l4-4v14l-4-4H1z" fill="#fff" />
                    <path d="M9 5q2 3 0 6M11 4q3 4 0 8M13 2q4 6 0 12" />
                </svg>
                <svg width="16" height="16" viewBox="0 0 16 16">
                    <path d="M3 1h10v14H3z" fill="#9fd4ec" stroke="#e8f4fa" />
                    <path d="M1 12C-1 9 9 3 14 3c3 1-2 7-7 8" fill="none" stroke="#e6b83c" strokeWidth="2" />
                    <path d="M5 9h6" stroke="#2c78b0" strokeWidth="2" />
                </svg>
                <svg width="16" height="16" viewBox="0 0 16 16">
                    <path d="M1.500 1v15" stroke="#fff" strokeWidth="1.500" />
                    <path d="M3 2c4-2 5 2 11 0v6c-5 2-7-1-11 1z" fill="#fff" />
                    <circle cx="11" cy="11" r="4.800" fill="#d8242c" />
                    <path d="M9 9l4 4M13 9l-4 4" stroke="#fff" strokeWidth="1.500" />
                </svg>
                <svg width="16" height="16" viewBox="0 0 16 16" fill="none" stroke="#fff" strokeWidth="1.500">
                    <path d="M6 2H2v12h7v-3" />
                    <path d="M8 5h6v2q0 3-3 3T8 7z" fill="#fff" />
                    <path d="M9.500 1v4M12.500 1v4M11 10v5" />
                </svg>
                <svg width="16" height="16" viewBox="0 0 16 16" fill="#fff">
                    <path d="M1 12h2v2H1zM4 10h2v4H4zM7 8h2v6H7zM10 5h2v9h-2zM13 2h2v12h-2z" />
                </svg>
            </div>
            <div className="ml-3 w-[66px] text-center text-[11px] leading-[17px] text-white">
                <p>19:45</p>
                <p>21.01.2025</p>
            </div>
            <button type="button" aria-label="Свернуть все окна" className="ml-[6px] h-full w-[14px] border border-[#7e9cba] bg-linear-to-br from-white/40 to-transparent shadow-[-1px_0_0_#122c48]" />
        </footer>
    );
}

export default function App() {
    return (
        <div className="min-h-screen bg-white">
            <main className={`relative min-h-[768px] w-full max-w-[1366px] overflow-hidden ${UI_FONT}`}>
                <Wallpaper />
                <div className="absolute top-[7px] left-0 grid grid-cols-[73px_76px_75px_75px] grid-rows-[repeat(7,104px)]">
                    {desktopIcons.map((item) => (
                        <DesktopIcon key={item.name} {...item} />
                    ))}
                </div>
                <Taskbar />
                <AmplifierWindow />
                <ViewerWindow />
            </main>
        </div>
    );
}
